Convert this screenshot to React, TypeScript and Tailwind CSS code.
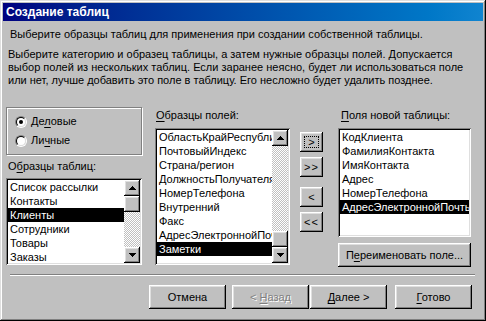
import type { ReactNode } from 'react'

const raised =
  'shadow-[inset_-1px_-1px_#000,inset_1px_1px_#fff,inset_-2px_-2px_#808080,inset_2px_2px_#dfdfdf]'
const sunken =
  'shadow-[inset_1px_1px_#808080,inset_-1px_-1px_#fff,inset_2px_2px_#000,inset_-2px_-2px_#dfdfdf]'
const checker = 'bg-[image:repeating-conic-gradient(#c0c0c0_0_25%,#fff_0_50%)] bg-[length:2px_2px]'

function Arrow({ up = false }: { up?: boolean }) {
  return (
    <div className={`flex h-4 w-4 shrink-0 items-center justify-center bg-[#c0c0c0] ${raised}`}>
      <svg width="7" height="4" viewBox="0 0 7 4" shapeRendering="crispEdges">
        {up ? (
          <g fill="#000">
            <rect x="3" y="0" width="1" height="1" />
            <rect x="2" y="1" width="3" height="1" />
            <rect x="1" y="2" width="5" height="1" />
            <rect x="0" y="3" width="7" height="1" />
          </g>
        ) : (
          <g fill="#000">
            <rect x="0" y="0" width="7" height="1" />
            <rect x="1" y="1" width="5" height="1" />
            <rect x="2" y="2" width="3" height="1" />
            <rect x="3" y="3" width="1" height="1" />
          </g>
        )}
      </svg>
    </div>
  )
}

function ScrollBar({ thumbAtEnd = false }: { thumbAtEnd?: boolean }) {
  return (
    <div className="flex w-4 shrink-0 flex-col">
      <Arrow up />
      {thumbAtEnd && <div className={`flex-1 ${checker}`} />}
      <div className={`h-4 shrink-0 bg-[#c0c0c0] ${raised}`} />
      {!thumbAtEnd && <div className={`flex-1 ${checker}`} />}
      <Arrow />
    </div>
  )
}

function ListBox({
  items,
  selected,
  className,
  scroll,
}: {
  items: string[]
  selected: number
  className: string
  scroll?: ReactNode
}) {
  return (
    <div className={`flex bg-white p-[2px] ${sunken} ${className}`}>
      <div className="min-w-0 flex-1 overflow-hidden">
        {items.map((item, i) => (
          <div
            key={item}
            className={`h-[14px] overflow-hidden whitespace-nowrap pl-[2px] leading-[14px] ${
              i === selected ? 'bg-black text-white' : ''
            }`}
          >
            {item}
          </div>
        ))}
      </div>
      {scroll}
    </div>
  )
}

function Radio({ checked = false, children }: { checked?: boolean; children: ReactNode }) {
  return (
    <div className="flex h-[19px] items-center gap-[4px]">
      <div className="flex h-3 w-3 shrink-0 rounded-full border border-t-[#808080] border-r-white border-b-white border-l-[#808080]">
        <div className="flex flex-1 items-center justify-center rounded-full border border-t-black border-r-[#dfdfdf] border-b-[#dfdfdf] border-l-black bg-white">
          {checked && <div className="h-1 w-1 rounded-full bg-black" />}
        </div>
      </div>
      <span>{children}</span>
    </div>
  )
}

function Btn({ className = '', children }: { className?: string; children: ReactNode }) {
  return (
    <button type="button" className={`flex shrink-0 items-center justify-center bg-[#c0c0c0] ${raised} ${className}`}>
      {children}
    </button>
  )
}

const U = ({ children }: { children: ReactNode }) => <span className="underline underline-offset-[2px]">{children}</span>

export default function App() {
  return (
    <div
      className={`flex h-[321px] w-[486px] flex-col bg-[#c0c0c0] p-[3px] font-['Liberation_Sans',Arial,sans-serif] text-[11px] text-black shadow-[inset_-1px_-1px_#000,inset_1px_1px_#dfdfdf,inset_-2px_-2px_#808080,inset_2px_2px_#fff]`}
    >
      <div className="flex h-[18px] shrink-0 items-center bg-linear-to-r from-[#000080] to-[#1084d0] pl-[3px] text-[12px] font-bold text-white">
        Создание таблиц
      </div>

      <p className="ml-[7px] mt-[7px] leading-[13px] whitespace-nowrap">
        Выберите образцы таблиц для применения при создании собственной таблицы.
      </p>
      <p className="ml-[5px] mt-[7px] leading-[13px] whitespace-nowrap">
        Выберите категорию и образец таблицы, а затем нужные образцы полей. Допускается
        <br />
        выбор полей из нескольких таблиц. Если заранее неясно, будет ли использоваться поле
        <br />
        или нет, лучше добавить это поле в таблицу. Его несложно будет удалить позднее.
      </p>

      <div className="mt-[20px] flex">
        {/* категории и образцы таблиц */}
        <div className="ml-[3px] flex w-[136px] flex-col">
          <div className="h-[48px] border border-[#808080] pl-[8px] pt-[4px] shadow-[inset_1px_1px_#fff,1px_1px_#fff]">
            <Radio checked>
              Де<U>л</U>овые
            </Radio>
            <Radio>
              Ли<U>ч</U>ные
            </Radio>
          </div>
          <div className="ml-[2px] mt-[5px] leading-[13px]">
            О<U>б</U>разцы таблиц:
          </div>
          <ListBox
            className="mt-[5px] h-[87px]"
            items={['Список рассылки', 'Контакты', 'Клиенты', 'Сотрудники', 'Товары', 'Заказы']}
            selected={2}
            scroll={<ScrollBar />}
          />
        </div>

        {/* образцы полей */}
        <div className="ml-[13px] flex w-[135px] flex-col">
          <div className="ml-[1px] mt-[2px] leading-[13px]">
            <U>О</U>бразцы полей:
          </div>
          <ListBox
            className="mt-[6px] h-[137px]"
            items={[
              'ОбластьКрайРеспублика',
              'ПочтовыйИндекс',
              'Страна/регион',
              'ДолжностьПолучателя',
              'НомерТелефона',
              'Внутренний',
              'Факс',
              'АдресЭлектроннойПочты',
              'Заметки',
            ]}
            selected={8}
            scroll={<ScrollBar thumbAtEnd />}
          />
        </div>

        {/* кнопки переноса */}
        <div className="ml-[10px] mt-[25px] flex w-[23px] flex-col">
          <Btn className="h-[20px]">
            <span className="m-[4px] flex flex-1 items-center justify-center self-stretch border border-dotted border-black leading-none">
              &gt;
            </span>
          </Btn>
          <Btn className="mt-[5px] h-[20px] tracking-[1px]">&gt;&gt;</Btn>
          <Btn className="mt-[10px] h-[20px]">&lt;</Btn>
          <Btn className="mt-[5px] h-[20px] tracking-[1px]">&lt;&lt;</Btn>
        </div>

        {/* поля новой таблицы */}
        <div className="ml-[15px] flex w-[133px] flex-col">
          <div className="ml-[3px] mt-[2px] leading-[13px]">
            <U>П</U>оля новой таблицы:
          </div>
          <ListBox
            className="mt-[6px] h-[109px]"
            items={['КодКлиента', 'ФамилияКонтакта', 'ИмяКонтакта', 'Адрес', 'НомерТелефона', 'АдресЭлектроннойПочты']}
            selected={5}
          />
          <Btn className="mt-[6px] h-[24px]">
            <span>
              П<U>е</U>реименовать поле...
            </span>
          </Btn>
        </div>
      </div>

      <div className="ml-[7px] mt-[7px] h-[2px] w-[465px] border-t border-b border-t-[#808080] border-b-white" />

      <div className="ml-[146px] mt-[9px] flex">
        <Btn className="h-[24px] w-[77px]">Отмена</Btn>
        <Btn className="ml-[6px] h-[24px] w-[77px] text-[#808080] [text-shadow:1px_1px_#fff]">
          <span className="whitespace-pre">
            {'< '}
            <U>Н</U>азад
          </span>
        </Btn>
        <Btn className="ml-[1px] h-[24px] w-[77px]">
          <span className="whitespace-pre">
            <U>Д</U>
            {'алее >'}
          </span>
        </Btn>
        <Btn className="ml-[8px] h-[24px] w-[77px]">
          <span>
            <U>Г</U>отово
          </span>
        </Btn>
      </div>
    </div>
  )
}
